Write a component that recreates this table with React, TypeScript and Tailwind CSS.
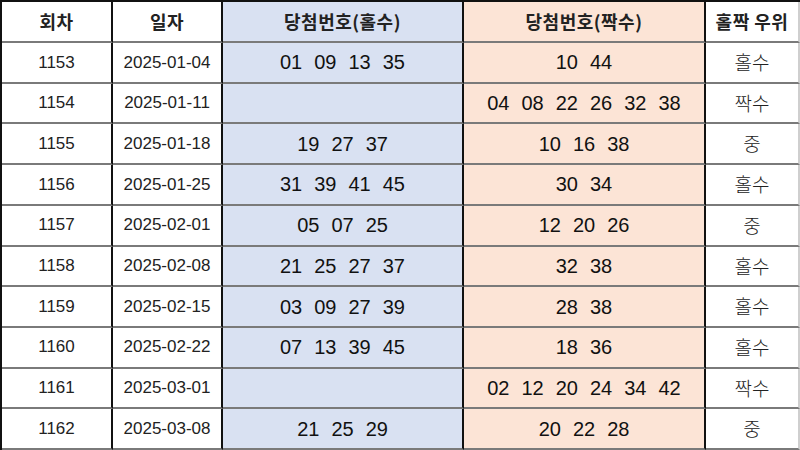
const rows: [string, string, string[], string[], string][] = [
  ["1153", "2025-01-04", ["01", "09", "13", "35"], ["10", "44"], "홀수"],
  ["1154", "2025-01-11", [], ["04", "08", "22", "26", "32", "38"], "짝수"],
  ["1155", "2025-01-18", ["19", "27", "37"], ["10", "16", "38"], "중"],
  ["1156", "2025-01-25", ["31", "39", "41", "45"], ["30", "34"], "홀수"],
  ["1157", "2025-02-01", ["05", "07", "25"], ["12", "20", "26"], "중"],
  ["1158", "2025-02-08", ["21", "25", "27", "37"], ["32", "38"], "홀수"],
  ["1159", "2025-02-15", ["03", "09", "27", "39"], ["28", "38"], "홀수"],
  ["1160", "2025-02-22", ["07", "13", "39", "45"], ["18", "36"], "홀수"],
  ["1161", "2025-03-01", [], ["02", "12", "20", "24", "34", "42"], "짝수"],
  ["1162", "2025-03-08", ["21", "25", "29"], ["20", "22", "28"], "중"],
];

const kr = "font-['Noto_Sans_CJK_KR',sans-serif]";
const num = "font-['Liberation_Sans','Noto_Sans_CJK_KR',sans-serif]";
const cell = "flex items-center justify-center border-b-2 border-b-[#7a7a7a] border-r-2 border-r-[#111]";
const head = `${cell} ${kr} text-[18px] font-bold text-[#222] tracking-[0.5px]`;

function Nums({ list }: { list: string[] }) {
  return (
    <div className={`flex gap-[12px] text-[20px] text-[#111] ${num}`}>
      {list.map((n, i) => (
        <span key={i}>{n}</span>
      ))}
    </div>
  );
}

export default function App() {
  return (
    <div className="w-[800px] h-[450px] bg-white overflow-hidden">
      <div className="grid grid-cols-[111px_110px_241px_242px_94px] grid-rows-[41px_repeat(10,1fr)] h-[450px] border-l-2 border-t-2 border-[#111]">
        <div className={head}>회차</div>
        <div className={head}>일자</div>
        <div className={`${head} bg-[#d9e1f2]`}>당첨번호(홀수)</div>
        <div className={`${head} bg-[#fce4d6]`}>당첨번호(짝수)</div>
        <div className={`${head} border-r-[#cfcfcf] border-r`}>홀짝 우위</div>
        {rows.map(([no, date, odd, even, lead]) => (
          <div key={no} className="contents">
            <div className={`${cell} ${num} text-[17px] text-[#222]`}>{no}</div>
            <div className={`${cell} ${num} text-[17px] text-[#222]`}>{date}</div>
            <div className={`${cell} bg-[#d9e1f2]`}>
              <Nums list={odd} />
            </div>
            <div className={`${cell} bg-[#fce4d6]`}>
              <Nums list={even} />
            </div>
            <div className={`${cell} ${kr} text-[19px] font-light text-[#222] border-r-[#cfcfcf] border-r`}>{lead}</div>
          </div>
        ))}
      </div>
    </div>
  );
}
